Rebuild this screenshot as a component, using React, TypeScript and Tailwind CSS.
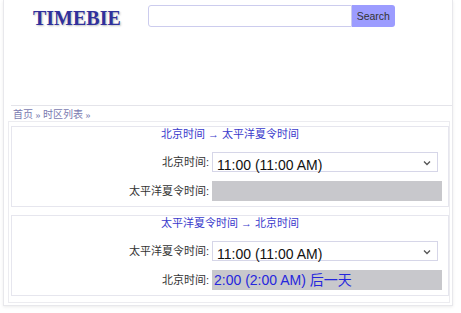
import React from 'react';

const cjk = "font-['Liberation_Sans','Noto_Sans_CJK_SC',sans-serif]";

function Chevron() {
    return (
        <svg width="8" height="6" viewBox="0 0 8 6" className="absolute right-[6px] top-[7px]">
            <path d="M1 1.5 L4 4.5 L7 1.5" fill="none" stroke="#555" strokeWidth="1.3" />
        </svg>
    );
}

function Converter({ title, from, to, result }: { title: string; from: string; to: string; result: string }) {
    return (
        <div className={`border border-[#e6e6ee] bg-white pb-[5px] ${cjk}`}>
            <div className="text-center text-[11px] leading-[14px] text-[#3a3acc]">{title}</div>
            <div className="mt-[11px] flex items-center">
                <div className="w-[200px] text-right text-[11px] text-[#333] pr-[3px]">{from}:</div>
                <div className="relative w-[226px] h-[20px] border border-[#d6d6e8] bg-white">
                    <span className="pl-[4px] text-[14px] leading-[18px] text-[#111] font-['Liberation_Sans',sans-serif]">11:00 (11:00 AM)</span>
                    <Chevron />
                </div>
            </div>
            <div className="mt-[9px] flex items-center">
                <div className="w-[200px] text-right text-[11px] text-[#333] pr-[3px]">{to}:</div>
                <div className="w-[230px] h-[20px] bg-[#c8c8cc] pl-[2px] text-[14px] leading-[20px] text-[#2626dd]">{result}</div>
            </div>
        </div>
    );
}

export default function App() {
    return (
        <div className="w-[461px] h-[313px] bg-white">
            <div className="ml-[3px] w-[450px] h-[306px] border border-t-0 border-[#e8e8ec] shadow-[0_1px_3px_rgba(0,0,0,0.08)]">
                <div className="ml-[7px] h-[106px] border-b border-[#e4e4ea] flex items-start">
                    <div className="ml-[22px] mt-[6px] font-['Liberation_Serif',serif] font-bold text-[20px] leading-[24px] text-[#30309c] [text-shadow:1px_1px_2px_#bbb]">TIMEBIE</div>
                    <div className="ml-[27px] mt-[5px] flex">
                        <div className="w-[204px] h-[22px] border border-[#ccccee] rounded-l-[3px] bg-white"></div>
                        <div className="w-[43px] h-[22px] bg-[#9c9cff] rounded-r-[3px] text-[10.5px] leading-[22px] text-center text-[#333] font-['Liberation_Sans',sans-serif]">Search</div>
                    </div>
                </div>
                <div className="ml-[9px] mt-[3px] text-[10px] leading-[11px] text-[#7a7ab0] font-['Liberation_Serif','Noto_Sans_CJK_SC',serif]">首页 » 时区列表 »</div>
                <div className="ml-[4px] mt-[1px] w-[442px] border border-[#ececf0] pt-[4px] pl-[2px] pb-[6px]">
                    <Converter title="北京时间 → 太平洋夏令时间" from="北京时间" to="太平洋夏令时间" result="" />
                    <div className="h-[8px]"></div>
                    <Converter title="太平洋夏令时间 → 北京时间" from="太平洋夏令时间" to="北京时间" result="2:00 (2:00 AM) 后一天" />
                </div>
            </div>
        </div>
    );
}
